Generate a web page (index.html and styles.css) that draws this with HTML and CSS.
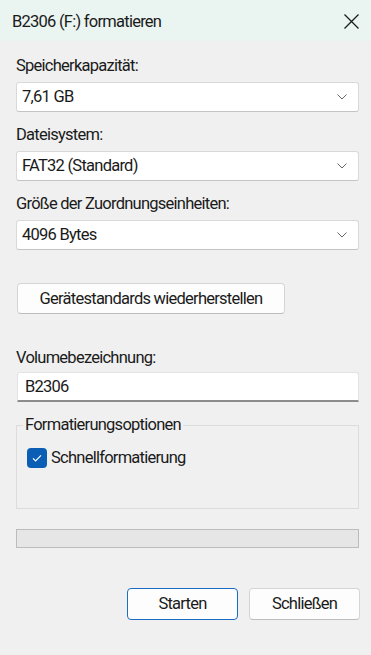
FILE: index.html
```html
<!DOCTYPE html>
<html lang="de">
  <head>
    <meta charset="UTF-8" />
    <meta name="viewport" content="width=device-width, initial-scale=1.0" />
    <title>B2306 (F:) formatieren</title>
    <link rel="stylesheet" href="styles.css">
  </head>
  <body>
    <div class="titlebar">
      <span class="title">B2306 (F:) formatieren</span>
      <svg class="close" width="15" height="15" viewBox="0 0 15 15">
        <path d="M0.5 0.5 L14.5 14.5 M14.5 0.5 L0.5 14.5" stroke="#1b1b1b" stroke-width="1.3" fill="none" />
      </svg>
    </div>

    <div class="content">
      <div class="field">
        <div class="label">Speicherkapazität:</div>
        <div class="combo">
          <span>7,61 GB</span>
          <svg class="chevron" width="10" height="6" viewBox="0 0 10 6">
            <path d="M0.5 0.5 L5 5 L9.5 0.5" stroke="#666666" stroke-width="1" fill="none" />
          </svg>
        </div>
      </div>

      <div class="field">
        <div class="label">Dateisystem:</div>
        <div class="combo">
          <span>FAT32 (Standard)</span>
          <svg class="chevron" width="10" height="6" viewBox="0 0 10 6">
            <path d="M0.5 0.5 L5 5 L9.5 0.5" stroke="#666666" stroke-width="1" fill="none" />
          </svg>
        </div>
      </div>

      <div class="field">
        <div class="label">Größe der Zuordnungseinheiten:</div>
        <div class="combo">
          <span>4096 Bytes</span>
          <svg class="chevron" width="10" height="6" viewBox="0 0 10 6">
            <path d="M0.5 0.5 L5 5 L9.5 0.5" stroke="#666666" stroke-width="1" fill="none" />
          </svg>
        </div>
      </div>

      <button class="btn btn-restore">Gerätestandards wiederherstellen</button>

      <div class="field field-volume">
        <div class="label">Volumebezeichnung:</div>
        <div class="textbox">B2306</div>
      </div>

      <fieldset class="group">
        <legend>Formatierungsoptionen</legend>
        <div class="check">
          <span class="box">
            <svg width="20" height="20" viewBox="0 0 20 20">
              <path d="M6 10.3 L8.6 12.9 L14 7.4" stroke="#ffffff" stroke-width="1.2" fill="none" />
            </svg>
          </span>
          <span>Schnellformatierung</span>
        </div>
      </fieldset>

      <div class="progress"></div>

      <div class="actions">
        <button class="btn btn-default">Starten</button>
        <button class="btn">Schließen</button>
      </div>
    </div>
  </body>
</html>
```

FILE: styles.css
```css
body {
  margin: 0;
  background: #f0f0f0;
  font-family: Roboto, "Noto Sans", sans-serif;
  font-size: 16.5px;
  letter-spacing: -0.75px;
  color: #1a1a1a;
}
.titlebar {
  height: 41px;
  background: #eaf4f1;
  display: flex;
  align-items: center;
  justify-content: space-between;
  padding: 0 12px 0 12px;
  line-height: 24px;
}
.title {
  padding-top: 2px;
}
.close {
  display: block;
  margin-top: 1px;
}
.content {
  padding: 12px 12px 0 16px;
}
.field {
  margin-bottom: 10px;
}
.label {
  line-height: 24px;
  padding-top: 1px;
  margin-bottom: 4px;
}
.combo {
  height: 28px;
  background: #ffffff;
  border: 1px solid #d9d9d9;
  border-bottom-color: #c4c4c4;
  border-radius: 3px;
  display: flex;
  align-items: center;
  justify-content: space-between;
  padding: 0 11px 0 5px;
  line-height: 24px;
}
.chevron {
  display: block;
}
.btn {
  font: inherit;
  letter-spacing: inherit;
  color: #1a1a1a;
  background: #fdfdfd;
  border: 1px solid #d5d5d5;
  border-bottom-color: #bdbdbd;
  border-radius: 4px;
  height: 31px;
  line-height: 24px;
  padding: 0;
  white-space: nowrap;
  cursor: pointer;
}
.btn-restore {
  display: block;
  width: 268px;
  height: 31px;
  margin: 33px 0 0 1px;
}
.field-volume {
  margin-top: 31px;
  margin-bottom: 0;
}
.field-volume .label {
  margin-bottom: 2px;
}
.textbox {
  margin-left: 1px;
  background: #ffffff;
  border: 1px solid #e3e3e3;
  border-bottom: 2px solid #8c8c8c;
  border-radius: 3px 3px 0 0;
  padding: 0 7px;
  line-height: 28px;
  height: 27px;
}
.group {
  margin: 11px 0 0 0;
  padding: 9px 10px 38px 10px;
  border: 1px solid #dcdcdc;
}
.group legend {
  padding: 0 2px;
  margin-left: -4px;
  line-height: 24px;
}
.check {
  display: flex;
  align-items: center;
  gap: 4px;
  line-height: 24px;
}
.box {
  width: 20px;
  height: 20px;
  border-radius: 4px;
  background: #0a5fb4;
  display: block;
}
.box svg {
  display: block;
}
.progress {
  margin-top: 20px;
  height: 17px;
  background: #e6e6e6;
  border: 1px solid #bcbcbc;
}
.actions {
  margin-top: 40px;
  display: flex;
  justify-content: flex-end;
  gap: 11px;
  margin-right: -1px;
}
.actions .btn {
  width: 111px;
  height: 32px;
}
.btn-default {
  border-color: #1a6fc4;
}
```
